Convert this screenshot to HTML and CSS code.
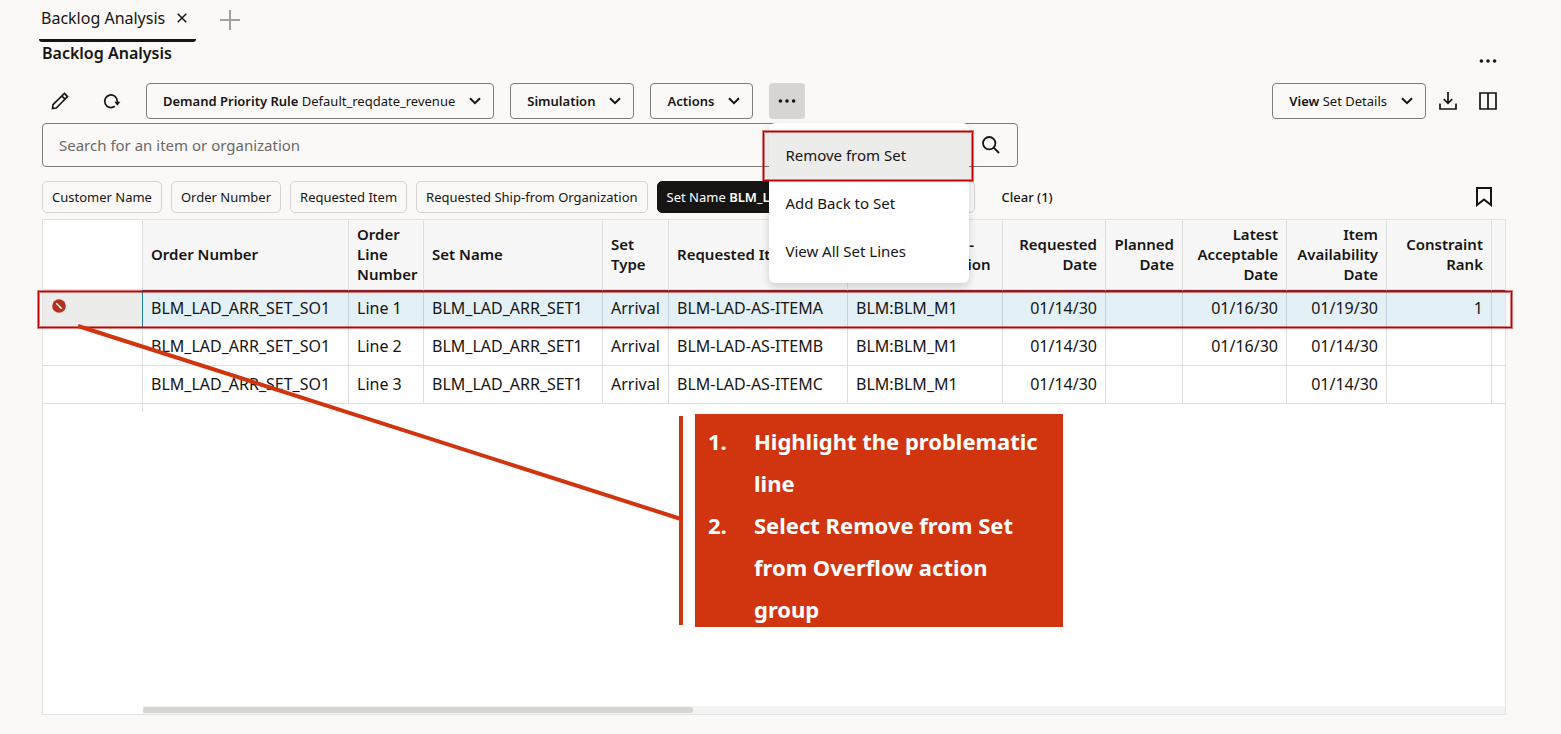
FILE: index.html
```html
<!DOCTYPE html>
<html lang="en">
<head>
<meta charset="utf-8">
<title>Backlog Analysis</title>
<link rel="stylesheet" href="styles.css">
</head>
<body>
<nav class="tabs">
  <div class="tab">
    <a class="tab-link" href="#backlog">Backlog Analysis</a>
    <button class="plain" aria-label="Close tab"><svg width="10" height="10" viewBox="0 0 10 10"><path d="M.7.7l8.6 8.6M9.3.7L.7 9.3"/></svg></button>
  </div>
  <button class="plain add" aria-label="Add tab"><svg width="20" height="20" viewBox="0 0 20 20"><path d="M10 0v20M0 10h20"/></svg></button>
</nav>
<main class="page" id="backlog">
  <header class="heading">
    <h1>Backlog Analysis</h1>
    <button class="icon-btn more" aria-label="Page actions"><svg width="18" height="4" viewBox="0 0 18 4" class="solid"><circle cx="2.4" cy="2" r="1.8"/><circle cx="9" cy="2" r="1.8"/><circle cx="15.6" cy="2" r="1.8"/></svg></button>
  </header>
  <div class="toolbar">
    <div class="group">
      <button class="icon-btn" aria-label="Edit"><svg width="18" height="18" viewBox="0 0 18 18"><path d="M1.500 16.500l.5-3.800L13.400 1.500l3.100 3.100L5.300 16zM10.900 4l3.100 3.100"/></svg></button>
      <button class="icon-btn" aria-label="Refresh"><svg width="18" height="18" viewBox="0 0 18 18"><path d="M11.800 14.300A6.300 6.300 0 1 1 14.300 9.300v1"/><path class="solid" d="M11.400 9.800h6L14.400 13.700z"/></svg></button>
      <button class="btn"><span><b>Demand Priority Rule</b> Default_reqdate_revenue</span><svg width="12" height="8" viewBox="0 0 12 8"><path d="M1 1.200l5 5 5-5"/></svg></button>
      <button class="btn"><b>Simulation</b><svg width="12" height="8" viewBox="0 0 12 8"><path d="M1 1.200l5 5 5-5"/></svg></button>
      <button class="btn"><b>Actions</b><svg width="12" height="8" viewBox="0 0 12 8"><path d="M1 1.200l5 5 5-5"/></svg></button>
      <div class="overflow">
        <button class="icon-btn pressed" aria-label="More actions" aria-expanded="true"><svg width="18" height="4" viewBox="0 0 18 4" class="solid"><circle cx="2.400" cy="2" r="1.800"/><circle cx="9" cy="2" r="1.800"/><circle cx="15.600" cy="2" r="1.800"/></svg></button>
        <div class="menu" role="menu">
          <button class="menu-item active" role="menuitem">Remove from Set</button>
          <button class="menu-item" role="menuitem">Add Back to Set</button>
          <button class="menu-item" role="menuitem">View All Set Lines</button>
        </div>
      </div>
    </div>
    <div class="group tight">
      <button class="btn"><span><b>View</b> Set Details</span><svg width="12" height="8" viewBox="0 0 12 8"><path d="M1 1.200l5 5 5-5"/></svg></button>
      <button class="icon-btn" aria-label="Download"><svg width="18" height="18" viewBox="0 0 18 18"><path d="M9 0v11M4.800 7.200L9 11.400l4.200-4.200M1 11.500V17h16v-5.500"/></svg></button>
      <button class="icon-btn" aria-label="Columns"><svg width="18" height="18" viewBox="0 0 18 18"><path d="M1 1h16v16H1zM9 1v16"/></svg></button>
    </div>
  </div>
  <form class="search">
    <input type="search" aria-label="Search" placeholder="Search for an item or organization">
    <button class="plain" type="button" aria-label="Search"><svg width="18" height="18" viewBox="0 0 18 18"><circle cx="7.200" cy="7.200" r="6.200"/><path d="M11.700 11.700l5.300 5.300"/></svg></button>
  </form>
  <div class="filters">
    <div class="chips">
      <button class="chip">Customer Name</button>
      <button class="chip">Order Number</button>
      <button class="chip">Requested Item</button>
      <button class="chip">Requested Ship-from Organization</button>
      <div class="chip-pair">
        <button class="chip selected">Set Name <b>BLM_LAD_ARR_SET1</b></button>
        <button class="chip last" aria-label="Filter"></button>
      </div>
      <button class="plain clear">Clear (1)</button>
    </div>
    <button class="plain" aria-label="Save search"><svg width="16" height="20" viewBox="0 0 16 20"><path d="M1 1h14v17l-7-5.500L1 18z"/></svg></button>
  </div>
  <section class="grid">
    <table>
      <colgroup><col class="w-head"><col class="w-order"><col class="w-line"><col class="w-name"><col class="w-type"><col class="w-name"><col class="w-org"><col class="w-req"><col class="w-plan"><col class="w-late"><col class="w-avail"><col class="w-rank"><col></colgroup>
      <thead>
        <tr><td class="corner"></td><th>Order Number</th><th>Order Line Number</th><th>Set Name</th><th>Set Type</th><th>Requested Item</th><th>Requested Ship-<br>from Organization</th><th class="num">Requested Date</th><th class="num">Planned Date</th><th class="num">Latest Acceptable Date</th><th class="num">Item Availability Date</th><th class="num">Constraint Rank</th><th></th></tr>
      </thead>
      <tbody>
        <tr class="chosen"><td class="mark"><svg width="14" height="14" viewBox="0 0 14 14" role="img" aria-label="Exception"><circle cx="7" cy="7" r="6.800"/><path d="M4.300 4.300l5.400 5.400"/></svg></td><td>BLM_LAD_ARR_SET_SO1</td><td>Line 1</td><td>BLM_LAD_ARR_SET1</td><td>Arrival</td><td>BLM-LAD-AS-ITEMA</td><td>BLM:BLM_M1</td><td class="num">01/14/30</td><td></td><td class="num">01/16/30</td><td class="num">01/19/30</td><td class="num">1</td><td></td></tr>
        <tr><td></td><td>BLM_LAD_ARR_SET_SO1</td><td>Line 2</td><td>BLM_LAD_ARR_SET1</td><td>Arrival</td><td>BLM-LAD-AS-ITEMB</td><td>BLM:BLM_M1</td><td class="num">01/14/30</td><td></td><td class="num">01/16/30</td><td class="num">01/14/30</td><td></td><td></td></tr>
        <tr><td></td><td>BLM_LAD_ARR_SET_SO1</td><td>Line 3</td><td>BLM_LAD_ARR_SET1</td><td>Arrival</td><td>BLM-LAD-AS-ITEMC</td><td>BLM:BLM_M1</td><td class="num">01/14/30</td><td></td><td></td><td class="num">01/14/30</td><td></td><td></td></tr>
      </tbody>
    </table>
    <div class="stub"></div>
    <div class="scrollbar"><div class="thumb"></div></div>
    <div class="row-frame"></div>
    <svg class="pointer" width="642" height="410" viewBox="0 0 642 410"><path d="M35 106L638 299M638 196v209"/></svg>
    <ol class="callout">
      <li>Highlight the problematic line</li>
      <li>Select Remove from Set from Overflow action group</li>
    </ol>
  </section>
</main>
</body>
</html>
```
FILE: styles.css
```css
* { box-sizing: border-box; }
body {
  margin: 0;
  min-height: 100vh;
  display: flex;
  flex-direction: column;
  background: #faf9f8;
  color: #161513;
  font: 15px/20px "Noto Sans", "Open Sans", sans-serif;
}
button { font: inherit; color: inherit; cursor: pointer; white-space: nowrap; }
b, th, h1 { font-weight: 600; }
svg { display: block; flex: none; fill: none; stroke: #161513; stroke-width: 2; }
svg.solid, .solid { fill: #161513; stroke: none; }
.plain { border: 0; padding: 0; background: none; }

.tabs { display: flex; align-items: flex-start; gap: 24px; padding-left: 39px; }
.tab {
  display: flex;
  align-items: center;
  justify-content: space-between;
  width: 157px;
  height: 42px;
  padding: 0 9px 3px 2px;
  border-bottom: 3px solid #161513;
  border-radius: 0 0 3px 3px;
}
.tab svg { stroke-width: 1.5; }
.tab-link { color: inherit; text-decoration: none; font-size: 16px; }
.add { margin-top: 10px; }
.add svg { stroke: #a3a19f; }

.page { flex: 1; display: flex; flex-direction: column; padding: 0 55px 19px 42px; }
.heading { display: flex; justify-content: space-between; height: 41px; }
h1 { margin: 1px 0 0; font-size: 16px; line-height: 20px; }
.icon-btn {
  display: flex;
  align-items: center;
  justify-content: center;
  width: 36px;
  height: 36px;
  padding: 0;
  border: 0;
  border-radius: 4px;
  background: none;
}
.icon-btn svg { stroke-width: 1.700; }
.more { margin-top: 1px; }
.pressed { background: #d8d4d2; }
.toolbar, .filters { display: flex; justify-content: space-between; }
.toolbar { height: 40px; }
.group { display: flex; gap: 16px; }
.tight { gap: 4px; }
.btn {
  display: flex;
  align-items: center;
  gap: 14px;
  height: 36px;
  padding: 0 12px 0 16px;
  border: 1px solid #7f7d7b;
  border-radius: 4px;
  background: none;
  font-size: 13px;
}
.overflow { position: relative; }
.menu {
  position: absolute;
  z-index: 2;
  top: 40px;
  left: 0;
  width: 200px;
  padding: 8px 0;
  border-radius: 6px;
  background: #fff;
  box-shadow: 0 4px 8px rgba(0, 0, 0, .16);
}
.menu-item {
  display: block;
  width: 100%;
  height: 48px;
  padding: 0 16px;
  border: 0;
  background: none;
  font-size: 15px;
  text-align: left;
}
.active { background: #ececea; }
.active::after, .row-frame {
  content: "";
  position: absolute;
  border: 1px solid #c00000;
  box-shadow: 0 0 0 1px rgba(192, 0, 0, .5), inset 0 0 0 1px rgba(192, 0, 0, .5);
}
.active::after { top: 8px; left: -6px; right: -4px; height: 48px; }

.search {
  display: flex;
  align-items: center;
  width: 976px;
  height: 44px;
  padding: 0 17px 0 16px;
  border: 1px solid #7f7d7b;
  border-radius: 4px;
}
.search input { flex: 1; border: 0; padding: 0; background: none; font: inherit; outline: 0; }
.search input::placeholder { color: #6b6967; opacity: 1; }
.search svg { stroke-width: 1.800; }

.filters { align-items: center; padding: 14px 14px 6px 0; }
.chips { display: flex; gap: 9px; }
.chip {
  height: 32px;
  padding: 0 9px;
  border: 1px solid #d6d4d2;
  border-radius: 5px;
  background: none;
  font-size: 13px;
}
.chip-pair { display: flex; gap: 9px; width: 318px; }
.selected { border-color: #161513; background: #161513; color: #fff; }
.last { flex: 1; }
.clear { margin-left: 18px; font-size: 13px; font-weight: 500; }

.grid {
  position: relative;
  flex: 1;
  display: flex;
  flex-direction: column;
  border: 1px solid #e4e3e2;
  background: #fff;
}
table { width: 100%; table-layout: fixed; border-collapse: separate; border-spacing: 0; }
th, td {
  height: 38px;
  padding: 0 8px 2px;
  border-right: 1px solid #dfdfde;
  border-bottom: 1px solid #dfdfde;
  text-align: left;
  white-space: nowrap;
  overflow: hidden;
}
td { font-size: 16px; }
th, .corner { height: 70px; padding-bottom: 1px; }
th { background: #f7f7f7; white-space: normal; }
th:last-child, td:last-child { border-right: 0; padding: 0; }
th.num, td.num { text-align: right; }
.w-head { width: 100px; }
.w-order { width: 206px; }
.w-line { width: 75px; }
.w-name { width: 179px; }
.w-type { width: 66px; }
.w-org { width: 155px; }
.w-req { width: 103px; }
.w-plan { width: 77px; }
.w-late { width: 104px; }
.w-avail { width: 100px; }
.w-rank { width: 105px; }
.chosen td { background: #e3f0f6; border-right-color: #c5d3da; box-shadow: inset 0 1px #4a4658; }
.chosen .mark { background: #ececea; border-right-color: #227e9e; padding: 0 9px 5px; box-shadow: none; }
.mark svg { fill: #b3311f; stroke: #fff; stroke-width: 1.600; }
.mark circle { stroke: none; }
.stub { width: 100px; height: 8px; border-right: 1px solid #dfdfde; }
.scrollbar { margin: auto 0 0 100px; height: 8px; padding: 1px 0; background: #f3f3f3; }
.thumb { width: 550px; height: 6px; border-radius: 2px; background: #d5d5d3; }
.row-frame { top: 71px; left: -5px; right: -7px; height: 37px; }
.pointer { position: absolute; top: 0; left: 0; stroke: #d13510; stroke-width: 4; }
.callout {
  position: absolute;
  top: 194px;
  left: 652px;
  width: 368px;
  height: 213px;
  margin: 0;
  padding: 6px 12px 0 59px;
  background: #d13510;
  color: #fff;
  font: 700 22px/42px "Noto Sans", "Open Sans", sans-serif;
  list-style: none;
  counter-reset: step;
}
.callout li { counter-increment: step; }
.callout li::before { content: counter(step) "."; float: left; width: 46px; margin-left: -46px; }
```
